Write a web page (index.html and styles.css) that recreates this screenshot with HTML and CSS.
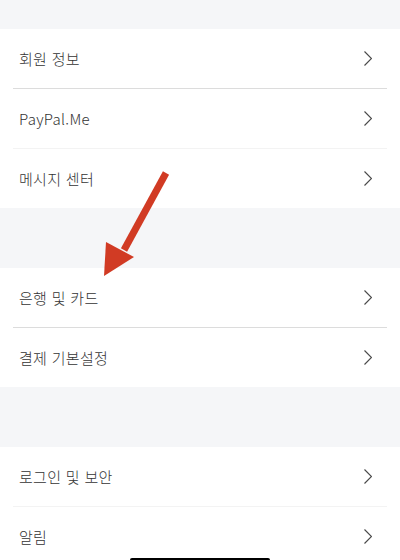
FILE: index.html
```html
<!DOCTYPE html>
<html lang="ko">

<head>
    <meta charset="UTF-8">
    <meta name="viewport" content="width=device-width, initial-scale=1.0">
    <title>설정</title>
    <link rel="stylesheet" href="styles.css">
</head>

<body>
    <div id="screen">
        <div class="group">
            <div class="row"><span>회원 정보</span><svg class="chev" viewBox="0 0 8 15"><path d="M0.5 0.5 L7.5 7.5 L0.5 14.5" /></svg></div>
            <div class="row"><span>PayPal.Me</span><svg class="chev" viewBox="0 0 8 15"><path d="M0.5 0.5 L7.5 7.5 L0.5 14.5" /></svg></div>
            <div class="row faint"><span>메시지 센터</span><svg class="chev" viewBox="0 0 8 15"><path d="M0.5 0.5 L7.5 7.5 L0.5 14.5" /></svg></div>
        </div>

        <div class="group">
            <div class="row"><span>은행 및 카드</span><svg class="chev" viewBox="0 0 8 15"><path d="M0.5 0.5 L7.5 7.5 L0.5 14.5" /></svg></div>
            <div class="row"><span>결제 기본설정</span><svg class="chev" viewBox="0 0 8 15"><path d="M0.5 0.5 L7.5 7.5 L0.5 14.5" /></svg></div>
        </div>

        <div class="group">
            <div class="row"><span>로그인 및 보안</span><svg class="chev" viewBox="0 0 8 15"><path d="M0.5 0.5 L7.5 7.5 L0.5 14.5" /></svg></div>
            <div class="row faint"><span>알림</span><svg class="chev" viewBox="0 0 8 15"><path d="M0.5 0.5 L7.5 7.5 L0.5 14.5" /></svg></div>
        </div>

        <!-- annotation arrow drawn over the list -->
        <svg class="arrow" width="400" height="560" viewBox="0 0 400 560">
            <line x1="166" y1="173" x2="124" y2="250" />
            <polygon points="104,276 106,242 134,257" />
        </svg>

        <div class="home-bar"></div>
    </div>
</body>

</html>
```

FILE: styles.css
```css
body {
    margin: 0;
    font-family: 'Noto Sans CJK KR', 'Noto Sans', sans-serif;
    background: #f5f6f8;
    color: #333;
}

#screen {
    position: relative;
    width: 400px;
    height: 560px;
    overflow: hidden;
    padding-top: 29px;
    box-sizing: border-box;
}

.group {
    background: #fff;
    padding: 0 13px;
    margin-bottom: 60px;
}

.row {
    height: 59px;
    display: flex;
    align-items: center;
    justify-content: space-between;
    padding: 0 6px;
    font-size: 15px;
    font-weight: 300;
    letter-spacing: 0.3px;
}

.row + .row {
    border-top: 1px solid #dcdcdc;
}

.row.faint {
    border-top-color: #f3f3f3;
}

.chev {
    width: 8px;
    height: 15px;
    margin-right: 9px;
}

.chev path {
    fill: none;
    stroke: #4a4a4a;
    stroke-width: 1.2;
}

.arrow {
    position: absolute;
    top: 0;
    left: 0;
}

.arrow line {
    stroke: #d13b24;
    stroke-width: 7;
}

.arrow polygon {
    fill: #d13b24;
}

.home-bar {
    position: absolute;
    left: 130px;
    top: 558px;
    width: 140px;
    height: 4px;
    background: #000;
    border-radius: 2px;
}
```
